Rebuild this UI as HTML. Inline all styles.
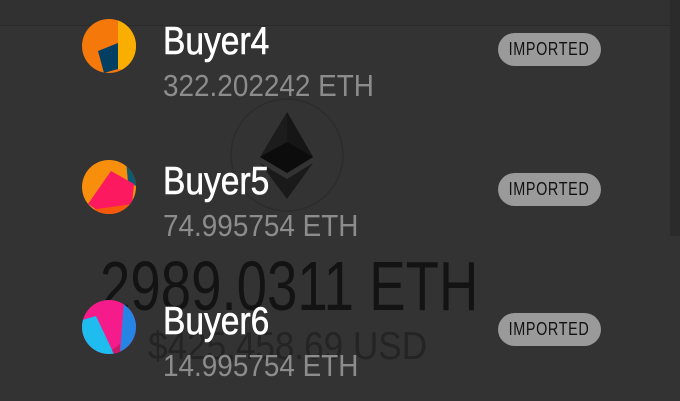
<!DOCTYPE html>
<html><head><meta charset="utf-8"><style>
*{margin:0;padding:0}
body{width:680px;height:401px;background:#333;overflow:hidden;position:relative;font-family:"Liberation Sans",sans-serif}
.hdr{position:absolute;left:0;top:0;width:670px;height:25px;background:#313131;border-bottom:1px solid #2a2a2a}
.sb{position:absolute;left:670px;top:0;width:10px;height:236px;background:#2b2b2b}
.t{position:absolute;white-space:nowrap;transform-origin:0 0}
.name{color:#fff;font-size:39px;transform:scaleX(0.86);-webkit-text-stroke:0.6px #fff}
.bal{color:#8c8c8c;font-size:31px;transform:scaleX(0.9)}
.badge{position:absolute;left:498px;width:103px;height:33px;border-radius:17px;background:#9a9a9a}
.badge span{position:absolute;left:51px;top:0;line-height:33px;font-size:18px;color:#111;letter-spacing:0.8px;white-space:nowrap;transform:translateX(-50%) scaleX(0.8)}
.av{position:absolute;left:82px;width:54px;height:54px}
</style></head><body>
<div class="hdr"></div>
<div class="sb"></div>
<svg style="position:absolute;left:0;top:0" width="680" height="401">
<circle cx="287" cy="155" r="56" fill="none" stroke="#2c2c2c" stroke-width="1.5"/>
<polygon points="287,112 260,157 287,173 313,157" fill="#1c1c1c"/>
<polygon points="287,112 287,173 313,157" fill="#161616"/>
<polygon points="260,157 287,142 313,157 287,173" fill="#0c0c0c"/>
<polygon points="260,163 287,179 313,163 287,199" fill="#1a1a1a"/>
</svg>
<div class="t" style="left:100px;top:246px;font-size:70px;color:#131313;transform:scaleX(0.78)">2989.0311 ETH</div>
<div class="t" style="left:148px;top:325px;font-size:39px;color:#242424;transform:scaleX(0.9)">$425,458.69 USD</div>

<svg class="av" style="top:19px" viewBox="0 0 54 54"><defs><clipPath id="c1"><circle cx="27" cy="27" r="27"/></clipPath></defs><g clip-path="url(#c1)">
<rect width="54" height="54" fill="#f5780a"/><polygon points="36,0 54,0 54,54 36,50" fill="#f9ae00"/><polygon points="16,32 36,24 36,50 22,54" fill="#033f63"/><polygon points="0,48 22,54 0,54" fill="#0d6e8e"/></g></svg>
<div class="t name" style="left:163px;top:20px">Buyer4</div>
<div class="t bal" style="left:163px;top:68px">322.202242 ETH</div>
<div class="badge" style="top:33px"><span>IMPORTED</span></div>

<svg class="av" style="top:160px" viewBox="0 0 54 54"><defs><clipPath id="c2"><circle cx="27" cy="27" r="27"/></clipPath></defs><g clip-path="url(#c2)">
<rect width="54" height="54" fill="#f88f0c"/><polygon points="44,0 54,0 54,26 46,22" fill="#0d5a6e"/><polygon points="29,11 52,24 50,44 18,52 6,44" fill="#fc1960"/><polygon points="8,50 50,44 54,54 8,54" fill="#f6590c"/></g></svg>
<div class="t name" style="left:163px;top:160px">Buyer5</div>
<div class="t bal" style="left:163px;top:208px">74.995754 ETH</div>
<div class="badge" style="top:173px"><span>IMPORTED</span></div>

<svg class="av" style="top:300px" viewBox="0 0 54 54"><defs><clipPath id="c3"><circle cx="27" cy="27" r="27"/></clipPath></defs><g clip-path="url(#c3)">
<rect width="54" height="54" fill="#f61b8a"/><polygon points="0,20 14,16 32,54 0,54" fill="#1ebcef"/><polygon points="42,0 54,0 54,54 38,54" fill="#2684e4"/><polygon points="30,50 38,44 38,54 32,54" fill="#c9186e"/></g></svg>
<div class="t name" style="left:163px;top:300px">Buyer6</div>
<div class="t bal" style="left:163px;top:348px">14.995754 ETH</div>
<div class="badge" style="top:313px"><span>IMPORTED</span></div>
</body></html>
